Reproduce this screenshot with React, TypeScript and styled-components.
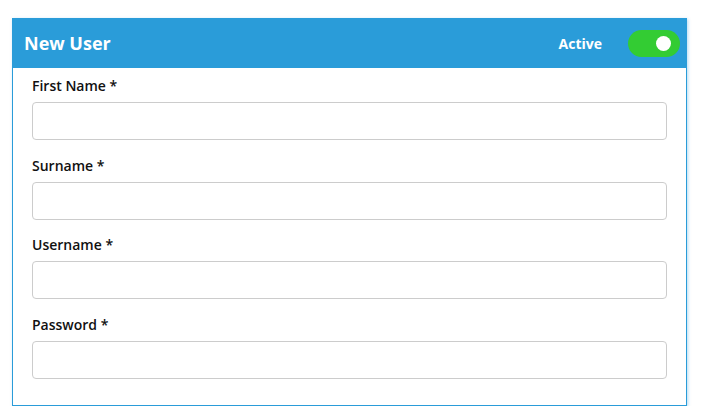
import styled, { createGlobalStyle } from "styled-components";

const GlobalStyle = createGlobalStyle`
  body {
    margin: 0;
    background: #ffffff;
    font-family: "Open Sans", "Noto Sans", sans-serif;
  }
`;

const Card = styled.div`
  margin: 18px 16px 0 12px;
  border: 1px solid #2a9cd9;
  border-top: none;
  background: #ffffff;
  box-shadow: 1px 1px 3px rgba(42, 156, 217, 0.35);
`;

const Header = styled.div`
  display: flex;
  align-items: center;
  justify-content: space-between;
  height: 50px;
  padding: 0 7px 0 12px;
  margin: 0 -1px;
  background: #2a9cd9;
  color: #ffffff;
`;

const Title = styled.h1`
  margin: 0;
  font-size: 18px;
  font-weight: 700;
`;

const StatusGroup = styled.div`
  display: flex;
  align-items: center;
  gap: 26px;
`;

const StatusLabel = styled.span`
  font-size: 14px;
  font-weight: 700;
`;

const Toggle = styled.div<{ $on: boolean }>`
  display: flex;
  align-items: center;
  justify-content: ${(p) => (p.$on ? "flex-end" : "flex-start")};
  width: 52px;
  height: 27px;
  padding: 0 9px;
  box-sizing: border-box;
  border-radius: 14px;
  background: ${(p) => (p.$on ? "#33cc33" : "#cccccc")};
`;

const Knob = styled.span`
  width: 15px;
  height: 15px;
  border-radius: 50%;
  background: #ffffff;
`;

const Body = styled.div`
  display: flex;
  flex-direction: column;
  gap: 16.5px;
  padding: 9px 19px 26px 19px;
`;

const Field = styled.div`
  display: flex;
  flex-direction: column;
  gap: 7px;
`;

const Label = styled.label`
  font-size: 14px;
  font-weight: 600;
  line-height: 18px;
  color: #111111;
`;

const Input = styled.input`
  height: 38px;
  box-sizing: border-box;
  border: 1px solid #cccccc;
  border-radius: 4px;
  padding: 0 10px;
  font-family: inherit;
  font-size: 14px;
  outline: none;
`;

const fields = ["First Name", "Surname", "Username", "Password"];

function App() {
  return (
    <>
      <GlobalStyle />
      <Card>
        <Header>
          <Title>New User</Title>
          <StatusGroup>
            <StatusLabel>Active</StatusLabel>
            <Toggle $on={true}>
              <Knob />
            </Toggle>
          </StatusGroup>
        </Header>
        <Body>
          {fields.map((name) => (
            <Field key={name}>
              <Label>{name} *</Label>
              <Input type={name === "Password" ? "password" : "text"} />
            </Field>
          ))}
        </Body>
      </Card>
    </>
  );
}

export default App;
